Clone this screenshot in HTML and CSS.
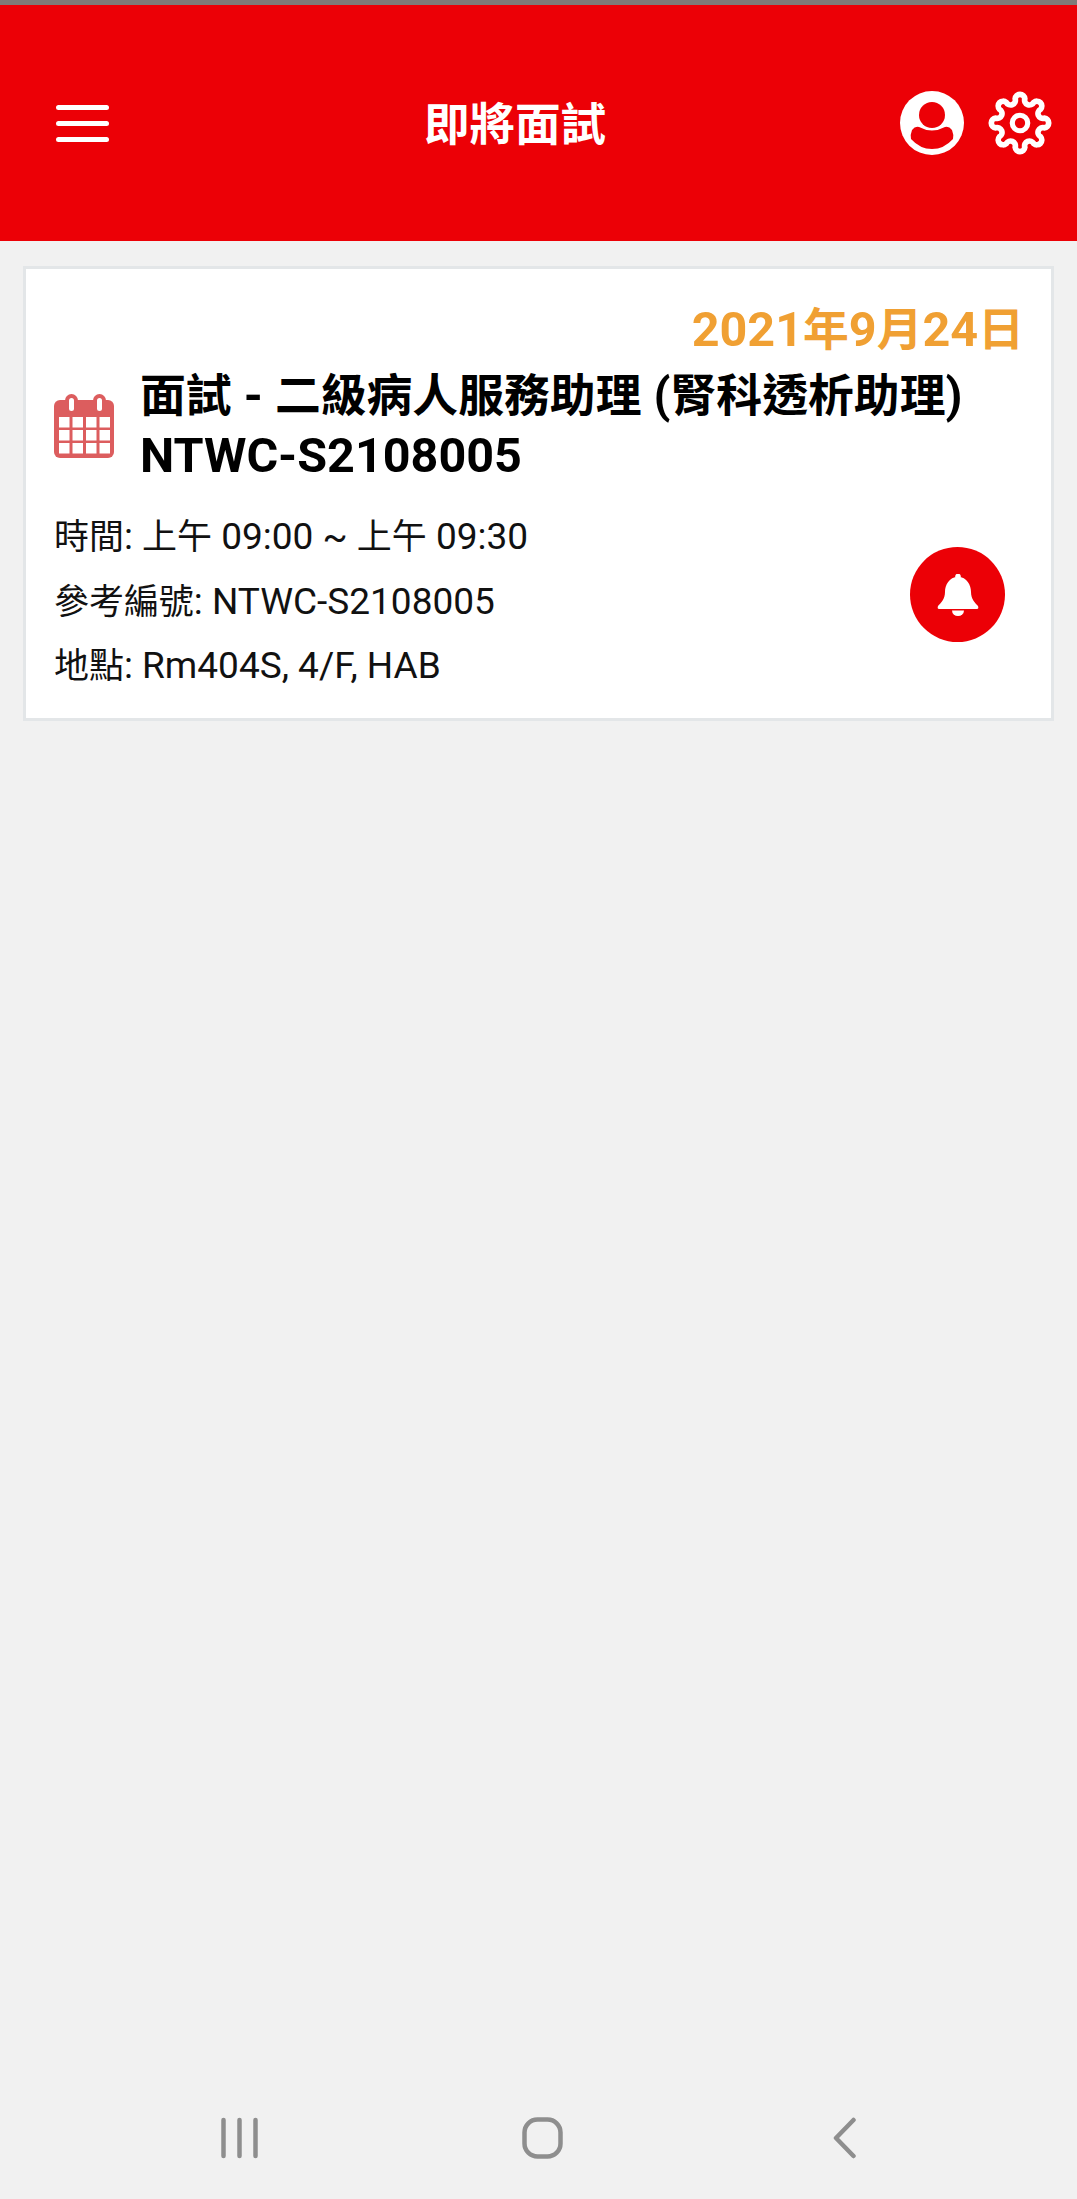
FILE: index.html
```html
<!DOCTYPE html>
<html lang="zh-Hant">
<head>
    <meta charset="UTF-8">
    <meta name="viewport" content="width=device-width, initial-scale=1.0">
    <title>即將面試</title>
    <link rel="stylesheet" href="styles.css">
</head>
<body>
    <div class="status-strip"></div>

    <!-- header -->
    <header class="top-bar">
        <svg class="menu-icon" viewBox="0 0 53 37">
            <rect x="0" y="0" width="53" height="5" rx="2.5"/>
            <rect x="0" y="16" width="53" height="5" rx="2.5"/>
            <rect x="0" y="32" width="53" height="5" rx="2.5"/>
        </svg>
        <h1 class="page-title">即將面試</h1>
        <div class="top-icons">
            <svg class="top-icon" viewBox="-32 -32 64 64">
                <circle cx="0" cy="0" r="32" fill="#fff"/>
                <circle cx="0" cy="-8" r="13" fill="#ec0006"/>
                <path fill="#ec0006" d="M-20 7 Q-17 3 -13 4 Q0 11 13 4 Q17 3 20 7 Q22 12 21 16 Q12 26 0 26 Q-12 26 -21 16 Q-22 12 -20 7Z"/>
            </svg>
            <svg class="top-icon" viewBox="-31 -31 62 62">
                <path fill="none" stroke="#fff" stroke-width="5.5" d="M23.54 -4.68 A4.7 4.7 0 0 1 23.54 4.68 A4.7 4.7 0 0 0 19.96 13.33 A4.7 4.7 0 0 1 13.33 19.96 A4.7 4.7 0 0 0 4.68 23.54 A4.7 4.7 0 0 1 -4.68 23.54 A4.7 4.7 0 0 0 -13.33 19.96 A4.7 4.7 0 0 1 -19.96 13.33 A4.7 4.7 0 0 0 -23.54 4.68 A4.7 4.7 0 0 1 -23.54 -4.68 A4.7 4.7 0 0 0 -19.96 -13.33 A4.7 4.7 0 0 1 -13.33 -19.96 A4.7 4.7 0 0 0 -4.68 -23.54 A4.7 4.7 0 0 1 4.68 -23.54 A4.7 4.7 0 0 0 13.33 -19.96 A4.7 4.7 0 0 1 19.96 -13.33 A4.7 4.7 0 0 0 23.54 -4.68Z"/>
                <circle cx="0" cy="0" r="7.5" fill="none" stroke="#fff" stroke-width="5"/>
            </svg>
        </div>
    </header>

    <!-- list -->
    <main class="content">
        <section class="card">
            <div class="card-date">2021<span class="cjk">年</span>9<span class="cjk">月</span>24<span class="cjk">日</span></div>
            <div class="card-head">
                <svg class="cal-icon" viewBox="0 0 60 64">
                    <rect x="0" y="6" width="60" height="58" rx="6" fill="#dc5d5e"/>
                    <rect x="11" y="0" width="13" height="20" rx="6.5" fill="#dc5d5e"/>
                    <rect x="39" y="0" width="13" height="20" rx="6.5" fill="#dc5d5e"/>
                    <rect x="15" y="4" width="5" height="13" rx="2.5" fill="#fff"/>
                    <rect x="43" y="4" width="5" height="13" rx="2.5" fill="#fff"/>
                    <g fill="#fff">
                        <rect x="5" y="23" width="10.5" height="10.5"/>
                        <rect x="18.5" y="23" width="10.5" height="10.5"/>
                        <rect x="32" y="23" width="10.5" height="10.5"/>
                        <rect x="45.5" y="23" width="10.5" height="10.5"/>
                        <rect x="5" y="36" width="10.5" height="10.5"/>
                        <rect x="18.5" y="36" width="10.5" height="10.5"/>
                        <rect x="32" y="36" width="10.5" height="10.5"/>
                        <rect x="45.5" y="36" width="10.5" height="10.5"/>
                        <rect x="5" y="49" width="10.5" height="10.5"/>
                        <rect x="18.5" y="49" width="10.5" height="10.5"/>
                        <rect x="32" y="49" width="10.5" height="10.5"/>
                        <rect x="45.5" y="49" width="10.5" height="10.5"/>
                    </g>
                </svg>
                <h2 class="card-title"><span class="cjk">面試</span> - <span class="cjk">二級病人服務助理</span> (<span class="cjk">腎科透析助理</span>) NTWC-S2108005</h2>
            </div>
            <div class="card-body">
                <div class="card-info">
                    <p><span class="cjk">時間</span>: <span class="cjk">上午</span> 09:00 ~ <span class="cjk">上午</span> 09:30</p>
                    <p><span class="cjk">參考編號</span>: NTWC-S2108005</p>
                    <p><span class="cjk">地點</span>: Rm404S, 4/F, HAB</p>
                </div>
                <button class="bell-btn">
                    <svg class="bell-icon" viewBox="-21 -21 42 42">
                        <circle cx="0" cy="-18.5" r="2.8"/>
                        <path d="M0 -18 C-9 -18 -13 -10 -13 -3 C-13 4 -17 8 -20 11 Q-21 14 -19 14 L19 14 Q21 14 20 11 C17 8 13 4 13 -3 C13 -10 9 -18 0 -18Z"/>
                        <path d="M-6 15.5 L6 15.5 A6 5.5 0 0 1 -6 15.5Z"/>
                    </svg>
                </button>
            </div>
        </section>
    </main>

    <!-- android nav bar -->
    <footer class="nav-bar">
        <svg class="nav-icon nav-recent" viewBox="0 0 37 42">
            <line x1="2.5" y1="3" x2="2.5" y2="39"/>
            <line x1="18.5" y1="3" x2="18.5" y2="39"/>
            <line x1="34.5" y1="3" x2="34.5" y2="39"/>
        </svg>
        <svg class="nav-icon nav-home" viewBox="0 0 41 42">
            <rect x="2.5" y="2.5" width="36" height="37" rx="13"/>
        </svg>
        <svg class="nav-icon nav-back" viewBox="0 0 23 42">
            <path d="M20.5 3 L3 21 L20.5 39"/>
        </svg>
    </footer>
</body>
</html>
```

FILE: styles.css
```css
*{
    box-sizing: border-box;
}
html,body{
    height: 100%;
}
body{
    margin: 0;
    height: 2199px;
    display: flex;
    flex-direction: column;
    background-color: #f1f1f1;
    font-family: Roboto, "Noto Sans CJK TC", sans-serif;
    color: #111;
    overflow: hidden;
}
.cjk{
    font-size: 0.945em;
}
.status-strip{
    height: 5px;
    background-color: #7f7b78;
}
.top-bar{
    height: 236px;
    display: flex;
    align-items: center;
    padding: 0 25px 0 56px;
    background-color: #ec0006;
}
.menu-icon{
    width: 53px;
    height: 37px;
    fill: #fff;
}
.page-title{
    margin: 6px 0 0 315px;
    font-size: 45.5px;
    font-weight: 700;
    line-height: 60px;
    color: #fff;
}
.top-icons{
    margin-left: auto;
    display: flex;
    align-items: center;
    gap: 24px;
}
.top-icon{
    width: 64px;
    height: 64px;
    display: block;
}
.content{
    flex: 1;
    padding: 25px 23px;
}
.card{
    height: 455px;
    background-color: #fff;
    border: 3px solid #e3e6e8;
    padding: 32px 27px 0 28px;
}
.card-date{
    text-align: right;
    font-size: 48.5px;
    font-weight: 700;
    line-height: 58px;
    margin-bottom: 7px;
    color: #f0a033;
}
.card-head{
    display: flex;
    align-items: center;
    gap: 26px;
}
.cal-icon{
    width: 60px;
    height: 64px;
    flex-shrink: 0;
}
.card-title{
    margin: 0;
    font-size: 48.5px;
    font-weight: 700;
    line-height: 59px;
    color: #000;
}
.card-body{
    display: flex;
    align-items: center;
    justify-content: space-between;
    margin-top: 20px;
}
.card-info p{
    margin: 0;
    font-size: 37px;
    line-height: 63.5px;
}
.bell-btn{
    width: 95px;
    height: 95px;
    margin: 0 19px 14px 0;
    padding: 0;
    border: none;
    border-radius: 50%;
    display: flex;
    align-items: center;
    justify-content: center;
    background-color: #ec0006;
}
.bell-icon{
    width: 42px;
    height: 42px;
    fill: #fff;
}
.nav-bar{
    height: 109px;
    display: flex;
    align-items: flex-start;
    padding: 27px 0 0 221px;
}
.nav-icon{
    height: 42px;
    fill: none;
    stroke: #8e8e8e;
    stroke-width: 4.5;
    stroke-linecap: round;
    stroke-linejoin: round;
}
.nav-recent{
    width: 37px;
}
.nav-home{
    width: 41px;
    margin-left: 264px;
}
.nav-back{
    width: 23px;
    margin-left: 270px;
}
```
